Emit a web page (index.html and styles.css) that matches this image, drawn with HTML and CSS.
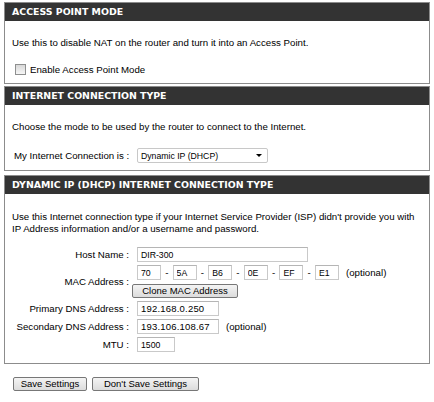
FILE: index.html
```html
<!DOCTYPE html>
<html>
<head>
<meta charset="utf-8">
<link rel="stylesheet" href="styles.css">
</head>
<body>
<div class="page">
  <section class="box box-ap">
    <h2 class="box-title">ACCESS POINT MODE</h2>
    <div class="box-body">
      <p class="desc">Use this to disable NAT on the router and turn it into an Access Point.</p>
      <label class="check-row"><input type="checkbox" class="check"><span>Enable Access Point Mode</span></label>
    </div>
  </section>

  <section class="box box-ict">
    <h2 class="box-title">INTERNET CONNECTION TYPE</h2>
    <div class="box-body">
      <p class="desc">Choose the mode to be used by the router to connect to the Internet.</p>
      <div class="conn-row">
        <span class="conn-label">My Internet Connection is :</span>
        <span class="select-wrap"><select class="select"><option>Dynamic IP (DHCP)</option></select></span>
      </div>
    </div>
  </section>

  <section class="box box-dhcp">
    <h2 class="box-title">DYNAMIC IP (DHCP) INTERNET CONNECTION TYPE</h2>
    <div class="box-body">
      <p class="desc">Use this Internet connection type if your Internet Service Provider (ISP) didn't provide you with<br>IP Address information and/or a username and password.</p>
      <div class="form">
        <span class="lbl">Host Name :</span>
        <div class="field"><input class="txt w-host" value="DIR-300"></div>

        <span class="lbl lbl-mac">MAC Address :</span>
        <div class="field mac">
          <input class="txt w-mac" value="70"><span class="dash">-</span>
          <input class="txt w-mac" value="5A"><span class="dash">-</span>
          <input class="txt w-mac" value="B6"><span class="dash">-</span>
          <input class="txt w-mac" value="0E"><span class="dash">-</span>
          <input class="txt w-mac" value="EF"><span class="dash">-</span>
          <input class="txt w-mac" value="E1"><span class="opt">(optional)</span>
        </div>
        <div class="field"><button class="btn btn-clone">Clone MAC Address</button></div>

        <span class="lbl">Primary DNS Address :</span>
        <div class="field"><input class="txt w-dns ip" value="192.168.0.250"></div>

        <span class="lbl">Secondary DNS Address :</span>
        <div class="field"><input class="txt w-dns ip" value="193.106.108.67"><span class="opt">(optional)</span></div>

        <span class="lbl">MTU :</span>
        <div class="field"><input class="txt w-mtu" value="1500"></div>
      </div>
    </div>
  </section>

  <div class="actions">
    <button class="btn btn-save">Save Settings</button>
    <button class="btn btn-nosave">Don't Save Settings</button>
  </div>
</div>
</body>
</html>
```

FILE: styles.css
```css
* { box-sizing: border-box; }

body {
  margin: 0;
  background: #fff;
  color: #000;
  font-family: "Liberation Sans", Arial, sans-serif;
  font-size: 9.7px;
}

.page {
  width: 426px;
  margin-left: 4px;
  padding-top: 2px;
}

.box {
  border: 1px solid #8c8c8c;
  background: #fff;
}

.box-ict { margin-top: 2px; }
.box-dhcp { margin-top: 4px; }

.box-title {
  margin: 0;
  height: 18px;
  line-height: 18px;
  padding-left: 7px;
  background: #333;
  color: #fff;
  font-family: "DejaVu Sans", Verdana, sans-serif;
  font-weight: bold;
  font-size: 9.4px;
}

.box-body {
  padding: 16px 0 7px 0;
}

.desc {
  margin: 0;
  padding-left: 7px;
  line-height: 12px;
}

.check-row {
  display: flex;
  align-items: center;
  height: 13px;
  margin-top: 14px;
  padding-left: 10px;
}

.check {
  appearance: none;
  -webkit-appearance: none;
  width: 11px;
  height: 11px;
  margin: 0 4px 0 0;
  border: 1px solid #8e8f8f;
  background: linear-gradient(#d8d8d8, #f6f6f6);
}

.conn-row {
  display: flex;
  align-items: center;
  margin-top: 15px;
}

.conn-label {
  width: 132px;
  padding-left: 9px;
}

.select-wrap {
  position: relative;
  display: block;
}

.select-wrap::after {
  content: "";
  position: absolute;
  right: 6px;
  top: 6px;
  border-left: 3px solid transparent;
  border-right: 3px solid transparent;
  border-top: 3px solid #000;
}

.select {
  appearance: none;
  -webkit-appearance: none;
  display: block;
  width: 131px;
  height: 15px;
  margin: 0;
  padding: 0 0 0 3px;
  border: 1px solid #c8c8c8;
  border-radius: 2px;
  background: #fff;
  font-family: "Liberation Sans", Arial, sans-serif;
  font-size: 8.7px;
  color: #000;
}

.box-dhcp .box-body {
  padding: 17px 0 11px 0;
}

.form {
  display: grid;
  grid-template-columns: 130px auto;
  column-gap: 2px;
  row-gap: 3px;
  margin-top: 12px;
}

.lbl {
  display: flex;
  align-items: center;
  justify-content: flex-end;
  padding-right: 6px;
  height: 15px;
}

.lbl-mac {
  grid-row: span 2;
  height: auto;
}

.field {
  display: flex;
  align-items: center;
  height: 15px;
}

.txt {
  height: 15px;
  margin: 0;
  padding: 0 3px;
  border: 1px solid #c9c9c9;
  border-top-color: #b5b5b5;
  background: #fff;
  font-family: "Liberation Sans", Arial, sans-serif;
  font-size: 8.7px;
  color: #000;
}

.ip { font-size: 9.5px; letter-spacing: 0.2px; }

.w-host { width: 171px; }
.w-mac { width: 24px; }
.w-dns { width: 82px; }
.w-mtu { width: 38px; }

.dash {
  width: 11.6px;
  text-align: center;
}

.opt {
  margin-left: 7px;
}

.btn {
  height: 14px;
  margin: 0;
  padding: 0;
  border: 1px solid #777;
  border-radius: 2px;
  background: linear-gradient(#f4f4f4, #dcdcdc);
  font-family: "Liberation Sans", Arial, sans-serif;
  font-size: 9.5px;
  color: #000;
  line-height: 12px;
}

.btn-clone {
  width: 106px;
  margin-left: -5px;
}

.actions {
  display: flex;
  gap: 5px;
  margin-top: 13px;
  padding-left: 9px;
}

.btn-save { width: 74px; }
.btn-nosave { width: 107px; }
```
